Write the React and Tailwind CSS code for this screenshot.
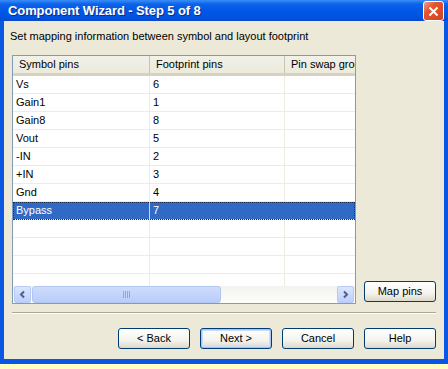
import React from 'react';

const rows = [
    { sym: 'Vs', fp: '6' },
    { sym: 'Gain1', fp: '1' },
    { sym: 'Gain8', fp: '8' },
    { sym: 'Vout', fp: '5' },
    { sym: '-IN', fp: '2' },
    { sym: '+IN', fp: '3' },
    { sym: 'Gnd', fp: '4' },
    { sym: 'Bypass', fp: '7', selected: true },
    { sym: '', fp: '' },
    { sym: '', fp: '' },
    { sym: '', fp: '' },
    { sym: '', fp: '' },
];

const XpButton = ({ children, isDefault }) => (
    <button
        className={`w-[72px] h-[21px] rounded-[3px] border border-[#003c74] bg-[linear-gradient(to_bottom,#ffffff_0%,#f4f3ee_60%,#dcd8c8_100%)] text-[11px] text-black leading-none flex items-center justify-center ${isDefault ? 'shadow-[inset_0_0_0_1px_#a9c4ef,inset_0_0_0_2px_#cadcf7]' : ''}`}
    >
        {children}
    </button>
);

const ScrollArrow = ({ dir }) => (
    <div className="w-[17px] h-[17px] rounded-[2px] border border-[#b7caf5] bg-[linear-gradient(to_bottom,#dbe6fe,#bccefb)] flex items-center justify-center">
        <svg width="9" height="9" viewBox="0 0 9 9">
            {dir === 'left' ? (
                <path d="M6 1.5 L3 4.5 L6 7.5" stroke="#4d6185" strokeWidth="2" fill="none" />
            ) : (
                <path d="M3 1.5 L6 4.5 L3 7.5" stroke="#4d6185" strokeWidth="2" fill="none" />
            )}
        </svg>
    </div>
);

export default function App() {
    return (
        <div className="w-[448px] h-[369px] bg-[#ffffc4] overflow-hidden" style={{ fontFamily: '"Liberation Sans", Arial, sans-serif' }}>
            <div className="w-[448px] h-[364px] flex flex-col bg-[#0a58e2]">
                {/* title bar */}
                <div className="h-[21px] shrink-0 flex items-center justify-between pl-[8px] pr-[4px] bg-[linear-gradient(to_bottom,#3a8ef9_0%,#0c62e8_20%,#0057e6_55%,#0052df_85%,#0a48c8_100%)]">
                    <span className="text-[13px] font-bold text-white tracking-[-0.1px] [text-shadow:1px_1px_0_#0a2f8a]">Component Wizard - Step 5 of 8</span>
                    <div className="w-[21px] h-[20px] mt-[1px] rounded-[3px] border border-white bg-[linear-gradient(135deg,#f0a08a_0%,#e3552f_35%,#d2421f_100%)] flex items-center justify-center">
                        <svg width="11" height="11" viewBox="0 0 11 11">
                            <path d="M1.5 1.5 L9.5 9.5 M9.5 1.5 L1.5 9.5" stroke="#ffffff" strokeWidth="2" />
                        </svg>
                    </div>
                </div>

                {/* body */}
                <div className="flex-1 mx-[4px] mb-[5px] bg-[#ece9d8] flex flex-col">
                    <div className="pl-[6px] pt-[8px] h-[34px] text-[11px] text-black leading-[14px]">
                        Set mapping information between symbol and layout footprint
                    </div>

                    <div className="flex items-end pl-[8px] pr-[8px]">
                        {/* list view */}
                        <div className="w-[344px] h-[249px] border border-[#7f9db9] bg-white flex flex-col overflow-hidden">
                            <div className="h-[20px] shrink-0 flex text-[11px] text-black bg-[linear-gradient(to_bottom,#f2f1ea,#ebeadb)] border-b-[3px] border-[#d6d2c2]">
                                <div className="w-[137px] shrink-0 pl-[6px] flex items-center border-r border-[#c7c5b2]">Symbol pins</div>
                                <div className="w-[135px] shrink-0 pl-[6px] flex items-center border-r border-[#c7c5b2]">Footprint pins</div>
                                <div className="flex-1 pl-[6px] flex items-center whitespace-nowrap overflow-hidden">Pin swap group</div>
                            </div>
                            <div className="flex-1 overflow-hidden">
                                {rows.map((r, i) => (
                                    <div
                                        key={i}
                                        className={`h-[18px] flex text-[11px] leading-none border-b border-[#edebe2] ${r.selected ? 'bg-[#316ac5] text-white outline outline-1 outline-dotted outline-offset-[-1px] outline-[#1c2f55]' : 'text-black'}`}
                                    >
                                        <div className={`w-[137px] shrink-0 pl-[3px] flex items-center border-r ${r.selected ? 'border-[#c8d6ee]' : 'border-[#edebe2]'}`}>{r.sym}</div>
                                        <div className={`w-[135px] shrink-0 pl-[3px] flex items-center border-r ${r.selected ? 'border-[#316ac5]' : 'border-[#edebe2]'}`}>{r.fp}</div>
                                        <div className="flex-1" />
                                    </div>
                                ))}
                            </div>
                            {/* horizontal scrollbar */}
                            <div className="h-[17px] shrink-0 flex items-center px-[1px] bg-[linear-gradient(to_bottom,#f3f2ee,#fdfdfb)]">
                                <ScrollArrow dir="left" />
                                <div className="flex-1 h-[17px] px-[1px] flex">
                                    <div className="w-[189px] h-[17px] rounded-[3px] border border-[#b1c6f0] bg-[linear-gradient(to_bottom,#cedcfd,#b8cdf9)] flex items-center justify-center">
                                        <div className="flex gap-[1px]">
                                            <div className="w-[1px] h-[7px] bg-[#8ea8e2]" />
                                            <div className="w-[1px] h-[7px] bg-[#8ea8e2]" />
                                            <div className="w-[1px] h-[7px] bg-[#8ea8e2]" />
                                            <div className="w-[1px] h-[7px] bg-[#8ea8e2]" />
                                        </div>
                                    </div>
                                </div>
                                <ScrollArrow dir="right" />
                            </div>
                        </div>

                        <div className="ml-[8px] mb-[2px]">
                            <XpButton>Map pins</XpButton>
                        </div>
                    </div>

                    <div className="mx-[8px] mt-[8px] h-[2px] border-t border-[#aca899] border-b border-b-white" />

                    <div className="flex justify-end gap-[10px] pr-[8px] mt-[14px]">
                        <XpButton>&lt; Back</XpButton>
                        <XpButton isDefault>Next &gt;</XpButton>
                        <XpButton>Cancel</XpButton>
                        <XpButton>Help</XpButton>
                    </div>
                </div>
            </div>
        </div>
    );
}
